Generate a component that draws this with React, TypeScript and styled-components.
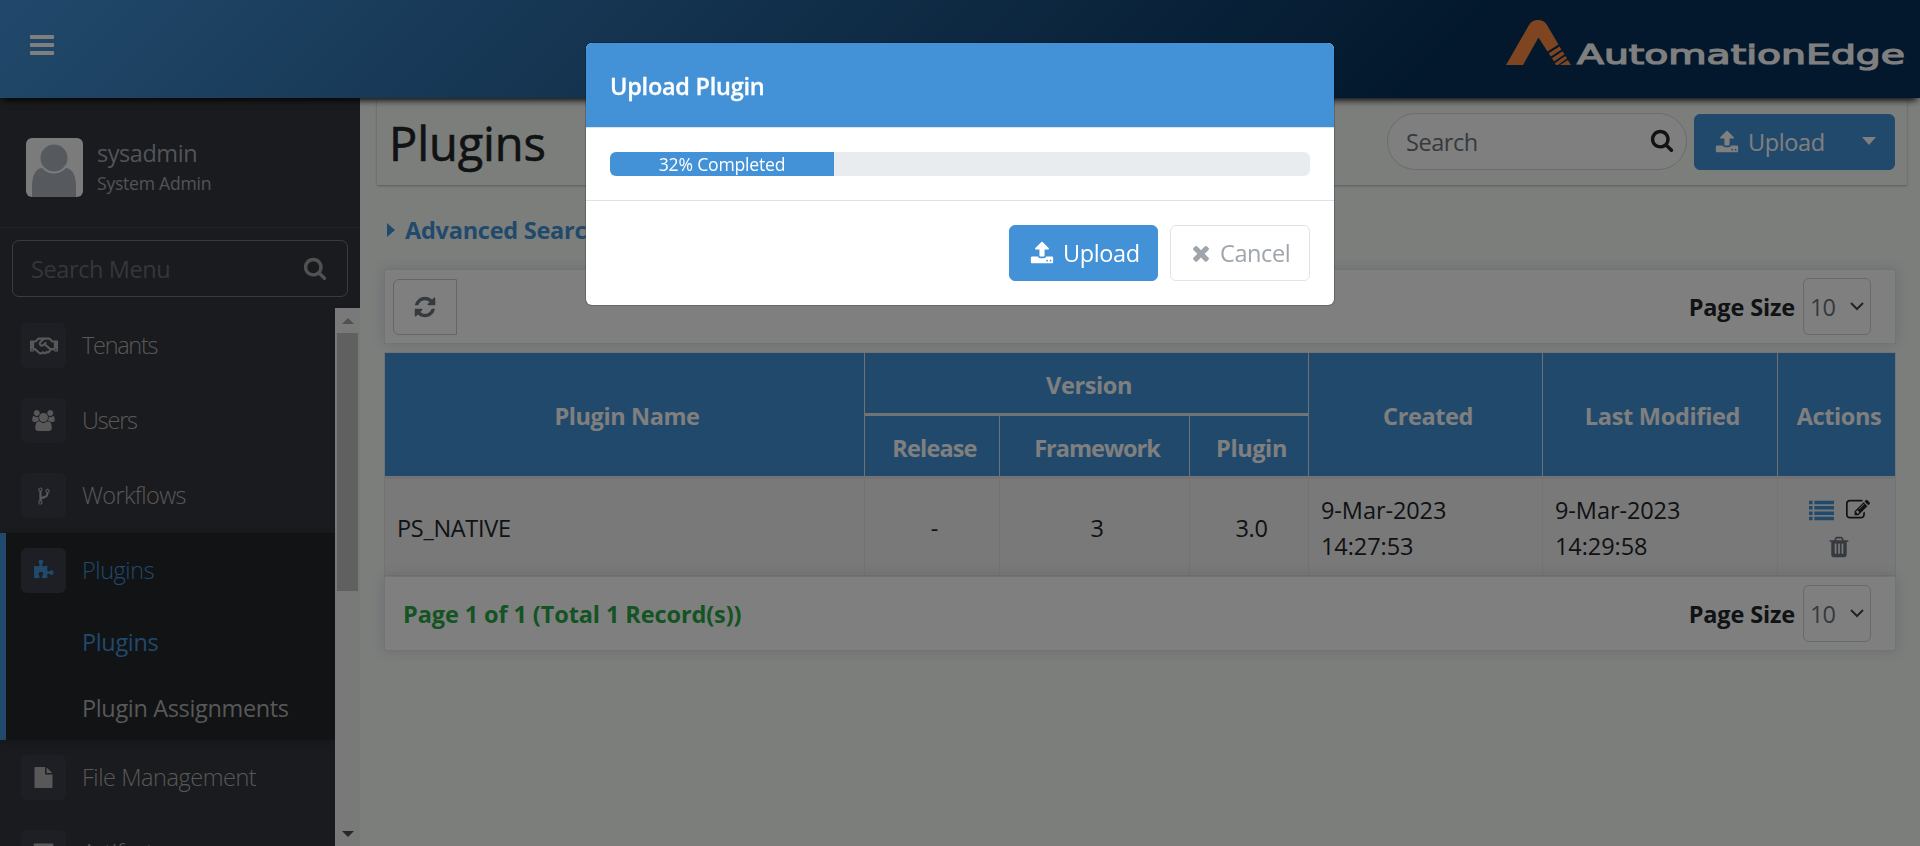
import React from 'react';
import styled, { createGlobalStyle, css } from 'styled-components';
import { FaRegHandshake } from 'react-icons/fa';

const blue = '#4392d7';

const Global = createGlobalStyle`
  * { box-sizing: border-box; }
  body {
    margin: 0;
    overflow: hidden;
    font-family: "Open Sans", "Noto Sans", "Liberation Sans", sans-serif;
    font-size: 23.5px;
    line-height: 36px;
    color: #212529;
    -webkit-font-smoothing: antialiased;
  }
`;

const paths = {
  search: 'M1216 832q0-185-131.5-316.5t-316.5-131.5-316.5 131.5-131.5 316.5 131.5 316.5 316.5 131.5 316.5-131.5 131.5-316.5zm512 832q0 52-38 90t-90 38q-54 0-90-38l-343-342q-179 124-399 124-143 0-273.5-55.5t-225-150-150-225-55.5-273.5 55.5-273.5 150-225 225-150 273.5-55.5 273.5 55.5 225 150 150 225 55.5 273.5q0 220-124 399l343 343q37 37 37 90z',
  upload: 'M1344 1472q0-26-19-45t-45-19-45 19-19 45 19 45 45 19 45-19 19-45zm256 0q0-26-19-45t-45-19-45 19-19 45 19 45 45 19 45-19 19-45zm128-224v320q0 40-28 68t-68 28h-1472q-40 0-68-28t-28-68v-320q0-40 28-68t68-28h427q21 56 70.5 92t110.5 36h256q61 0 110.5-36t70.5-92h427q40 0 68 28t28 68zm-325-648q-17 40-59 40h-256v448q0 26-19 45t-45 19h-256q-26 0-45-19t-19-45v-448h-256q-42 0-59-40-17-39 14-69l448-448q18-19 45-19t45 19l448 448q31 30 14 69z',
  times: 'M1490 1322q0 40-28 68l-136 136q-28 28-68 28t-68-28l-294-294-294 294q-28 28-68 28t-68-28l-136-136q-28-28-28-68t28-68l294-294-294-294q-28-28-28-68t28-68l136-136q28-28 68-28t68 28l294 294 294-294q28-28 68-28t68 28l136 136q28 28 28 68t-28 68l-294 294 294 294q28 28 28 68z',
  refresh: 'M1639 1056q0 5-1 7-64 268-268 434.5t-478 166.5q-146 0-282.5-55t-243.5-157l-129 129q-19 19-45 19t-45-19-19-45v-448q0-26 19-45t45-19h448q26 0 45 19t19 45-19 45l-137 137q71 66 161 102t187 36q134 0 250-65t186-179q11-17 53-117 8-23 30-23h192q13 0 22.5 9.5t9.5 22.5zm25-800v448q0 26-19 45t-45 19h-448q-26 0-45-19t-19-45 19-45l138-138q-148-137-349-137-134 0-250 65t-186 179q-11 17-53 117-8 23-30 23h-199q-13 0-22.5-9.5t-9.5-22.5v-7q65-268 270-434.5t480-166.5q146 0 284 55.5t245 156.5l130-129q19-19 45-19t45 19 19 45z',
  trash: 'M704 1376v-704q0-14-9-23t-23-9h-64q-14 0-23 9t-9 23v704q0 14 9 23t23 9h64q14 0 23-9t9-23zm256 0v-704q0-14-9-23t-23-9h-64q-14 0-23 9t-9 23v704q0 14 9 23t23 9h64q14 0 23-9t9-23zm256 0v-704q0-14-9-23t-23-9h-64q-14 0-23 9t-9 23v704q0 14 9 23t23 9h64q14 0 23-9t9-23zm-544-992h448l-48-117q-7-9-17-11h-317q-10 2-17 11zm928 32v64q0 14-9 23t-23 9h-96v948q0 83-47 143.5t-113 60.5h-832q-66 0-113-58.5t-47-141.5v-952h-96q-14 0-23-9t-9-23v-64q0-14 9-23t23-9h309l70-167q15-37 54-63t79-26h320q40 0 79 26t54 63l70 167h309q14 0 23 9t9 23z',
  edit: 'M888 1184l116-116-152-152-116 116v56h96v96h56zm440-720q-16-16-33 1l-350 350q-17 17-1 33t33-1l350-350q17-17 1-33zm80 594v190q0 119-84.5 203.5t-203.5 84.5h-832q-119 0-203.5-84.5t-84.5-203.5v-832q0-119 84.5-203.5t203.5-84.5h832q63 0 117 25 15 7 18 23 3 17-9 29l-49 49q-14 14-32 8-23-6-45-6h-832q-66 0-113 47t-47 113v832q0 66 47 113t113 47h832q66 0 113-47t47-113v-126q0-13 9-22l64-64q15-15 35-7t20 29zm-96-738l288 288-672 672h-288v-288zm444 132l-92 92-288-288 92-92q28-28 68-28t68 28l152 152q28 28 28 68t-28 68z',
  list: 'M0 1344h256v256h-256zM0 960h256v256h-256zM0 576h256v256h-256zM0 192h256v256h-256zM384 1344h1408v256h-1408zM384 960h1408v256h-1408zM384 576h1408v256h-1408zM384 192h1408v256h-1408z',
  fork: 'M672 1472q0-40-28-68t-68-28-68 28-28 68 28 68 68 28 68-28 28-68zm0-1152q0-40-28-68t-68-28-68 28-28 68 28 68 68 28 68-28 28-68zm640 128q0-40-28-68t-68-28-68 28-28 68 28 68 68 28 68-28 28-68zm96 0q0 52-26 96.5t-70 69.5q-2 287-226 414-67 38-203 81-128 40-169.5 71t-41.5 100v26q44 25 70 69.5t26 96.5q0 80-56 136t-136 56-136-56-56-136q0-52 26-96.5t70-69.5v-820q-44-25-70-69.5t-26-96.5q0-80 56-136t136-56 136 56 56 136q0 52-26 96.5t-70 69.5v497q54-26 154-57 55-17 87.5-29.5t70.5-31 59-39.5 40.5-51 28-69.5 8.5-91.5q-44-25-70-69.5t-26-96.5q0-80 56-136t136-56 136 56 56 136z',
  file: 'M1152 512v-472q22 14 36 28l408 408q14 14 28 36h-472zm-128 32q0 40 28 68t68 28h544v1056q0 40-28 68t-68 28h-1344q-40 0-68-28t-28-68v-1600q0-40 28-68t68-28h800v544z',
  archive: 'M64 128h1664v384h-1664zM128 640h1536v1024h-1536z',
  puzzle: 'M1755 1083q0 81-44.5 135t-123.5 54q-41 0-77.5-17.5t-59-38-56.5-38-71-17.5q-110 0-110 124 0 39 16 115t15 115v5q-22 0-33 1-34 3-97.5 11.5t-115.5 13.5-98 5q-61 0-103-26.5t-42-83.5q0-37 17.5-71t38-56.5 38-59 17.5-77.5q0-79-54-123.5t-135-44.5q-84 0-143 45.5t-59 127.5q0 43 15 83t33.5 64.5 33.5 53 15 50.5q0 45-46 89-37 35-117 35-95 0-245-24-9-2-27.5-4t-27.5-4l-13-2q-1 0-3-1-2 0-2-1v-1024q2 1 17.5 3.5t34 5 21.5 3.5q150 24 245 24 80 0 117-35 46-44 46-89 0-22-15-50.5t-33.5-53-33.5-64.5-15-83q0-82 59-127.5t144-45.5q80 0 134 44.5t54 123.5q0 41-17.5 77.5t-38 59-38 56.5-17.5 71q0 57 42 83.5t103 26.5q64 0 180-15t163-17v2q-1 2-3.5 17.5t-5 34-3.5 21.5q-24 150-24 245 0 80 35 117 44 46 89 46 22 0 50.5-15t53-33.5 64.5-33.5 83-15q82 0 127.5 59t45.5 143z',
  users: 'M529 896q-162 5-265 128h-134q-82 0-138-40.5t-56-118.5q0-353 124-353 6 0 43.5 21t97.5 42.5 119 21.5q67 0 133-23-5 37-5 66 0 139 81 256zm1071 637q0 120-73 189.5t-194 69.5h-874q-121 0-194-69.5t-73-189.5q0-53 3.5-103.5t14-109 26.5-108.5 43-97.5 62-81 85.5-53.5 111.5-20q10 0 43 21.5t73 48 107 48 135 21.5 135-21.5 107-48 73-48 43-21.5q61 0 111.5 20t85.5 53.5 62 81 43 97.5 26.5 108.5 14 109 3.5 103.5zm-1024-1277q0 106-75 181t-181 75-181-75-75-181 75-181 181-75 181 75 75 181zm704 384q0 159-112.5 271.5t-271.5 112.5-271.5-112.5-112.5-271.5 112.5-271.5 271.5-112.5 271.5 112.5 112.5 271.5zm576 225q0 78-56 118.5t-138 40.5h-134q-103-123-265-128 81-117 81-256 0-29-5-66 66 23 133 23 59 0 119-21.5t97.5-42.5 43.5-21q124 0 124 353zm-128-609q0 106-75 181t-181 75-181-75-75-181 75-181 181-75 181 75 75 181z',
  bars: 'M1664 1344v128q0 26-19 45t-45 19h-1408q-26 0-45-19t-19-45v-128q0-26 19-45t45-19h1408q26 0 45 19t19 45zm0-512v128q0 26-19 45t-45 19h-1408q-26 0-45-19t-19-45v-128q0-26 19-45t45-19h1408q26 0 45 19t19 45zm0-512v128q0 26-19 45t-45 19h-1408q-26 0-45-19t-19-45v-128q0-26 19-45t45-19h1408q26 0 45 19t19 45z',
};
type IconName = keyof typeof paths;

const Svg = styled.svg`
  display: block;
  flex: none;
  overflow: visible;
  fill: currentColor;
`;

function Icon({ name, size = 24 }: { name: IconName; size?: number }) {
  return (
    <Svg width={size} height={size} viewBox="0 0 1792 1792">
      <path d={paths[name]} />
    </Svg>
  );
}

const Page = styled.div`
  height: 846px;
  display: flex;
  flex-direction: column;
  background: #f8fcf9;
  overflow: hidden;
`;

const TopBar = styled.header`
  flex: none;
  height: 98px;
  display: flex;
  align-items: center;
  justify-content: space-between;
  padding: 0 15px 9px 28px;
  color: #fff;
  background: linear-gradient(135deg, ${blue} 0%, #063058 75%);
  box-shadow: 0 5px 7px -3px #000;
  position: relative;
  z-index: 1;
`;

const LogoSvg = styled.svg`
  margin-top: -5px;
`;

const Body = styled.div`
  flex: 1;
  min-height: 0;
  display: flex;
`;

const Sidebar = styled.aside`
  width: 360px;
  flex: none;
  display: flex;
  flex-direction: column;
  background: #34363c;
`;

const Profile = styled.div`
  height: 130px;
  flex: none;
  display: flex;
  gap: 14px;
  padding: 40px 26px 0;
  border-bottom: 1px solid #46494f;
`;

const Avatar = styled.svg`
  width: 57px;
  height: 59px;
  border-radius: 6px;
  background: #f6f6f6;
`;

const UserName = styled.div`
  line-height: 28px;
  margin-top: 1px;
  letter-spacing: -0.45px;
  color: #a3a8b5;
`;

const UserRole = styled.div`
  font-size: 17.6px;
  line-height: 28px;
  margin-top: 2px;
  letter-spacing: -0.25px;
  color: #a3a6ac;
`;

const MenuSearch = styled.div`
  height: 57px;
  flex: none;
  margin: 12px 12px 11px;
  padding: 0 20px 0 18px;
  display: flex;
  align-items: center;
  justify-content: space-between;
  border: 1px solid #74767c;
  border-radius: 7px;
  color: #646e76;
  letter-spacing: -0.4px;
  svg { color: #a2a2a2; margin-top: -2px; }
`;

const MenuArea = styled.div`
  flex: 1;
  min-height: 0;
  display: flex;
`;

const Menu = styled.nav`
  flex: 1;
  overflow: hidden;
`;

const Group = styled.div<{ $active?: boolean }>`
  ${p => p.$active && css`
    background: #222629;
    box-shadow: inset 6px 0 0 ${blue}, 0 3px 10px rgba(0, 0, 0, 0.2);
  `}
`;

const MenuItem = styled.div<{ $active?: boolean; $spacing?: number }>`
  height: 75px;
  display: flex;
  align-items: center;
  gap: 16px;
  padding-left: 21px;
  font-weight: 300;
  letter-spacing: ${p => p.$spacing ?? -0.45}px;
  color: ${p => (p.$active ? blue : '#b0b0b0')};
`;

const MenuLabel = styled.span`
  padding-bottom: 2px;
`;

const IconBox = styled.span`
  width: 45px;
  height: 45px;
  display: flex;
  align-items: center;
  justify-content: center;
  border-radius: 6px;
  background: #3c3e48;
`;

const SubItem = styled.div<{ $active?: boolean }>`
  height: 66px;
  padding: 16px 0 0 82px;
  letter-spacing: -0.35px;
  color: ${p => (p.$active ? blue : '#b0b0b0')};
`;

const Scrollbar = styled.div`
  width: 25px;
  display: flex;
  flex-direction: column;
  align-items: center;
  background: #f2f2f2;
`;

const Thumb = styled.div`
  width: 21px;
  height: 258px;
  background: #c1c1c1;
`;

const ScrollArrow = styled.div<{ $down?: boolean }>`
  width: 25px;
  height: 25px;
  display: flex;
  align-items: center;
  justify-content: center;
  margin-top: ${p => (p.$down ? 'auto' : 0)};
  &::before {
    content: '';
    border: 6px solid transparent;
    ${p => (p.$down
      ? 'border-bottom: 0; border-top-color: #505050;'
      : 'border-top: 0; border-bottom-color: #a3a3a3;')}
  }
`;

const Main = styled.main`
  flex: 1;
  min-width: 0;
  padding: 0 13px 0 17px;
`;

const TitleBar = styled.section`
  height: 87px;
  display: flex;
  align-items: center;
  gap: 7px;
  padding: 0 12px 0 12px;
  box-shadow: 0 1px 2px rgba(0, 0, 0, 0.28);
`;

const Title = styled.h1`
  margin: 3px auto 0 0;
  font-size: 47px;
  line-height: 60px;
  font-weight: 500;
  letter-spacing: -0.1px;
  -webkit-text-stroke: 0.6px currentColor;
`;

const SearchField = styled.div`
  width: 300px;
  height: 57px;
  display: flex;
  align-items: center;
  justify-content: space-between;
  padding: 0 12px 0 18px;
  border: 1px solid #d5d9d7;
  border-radius: 29px;
  background: #fff;
  color: #6c757d;
  letter-spacing: -0.45px;
  svg { color: #212529; margin-top: -4px; }
`;

const Button = styled.button<{ $plain?: boolean; $width: number }>`
  width: ${p => p.$width}px;
  height: 56px;
  display: flex;
  align-items: center;
  gap: ${p => (p.$plain ? 7 : 9)}px;
  padding: 0 0 0 ${p => (p.$plain ? 18 : 20)}px;
  border: 1px solid ${p => (p.$plain ? '#e1e4e7' : blue)};
  border-radius: 6px;
  background: ${p => (p.$plain ? '#fff' : blue)};
  color: ${p => (p.$plain ? '#9fa5aa' : '#fff')};
  font: inherit;
  letter-spacing: -0.4px;
`;

const Caret = styled.i<{ $right?: boolean }>`
  display: inline-block;
  border: 7px solid transparent;
  ${p => (p.$right
    ? 'border-right: 0; border-left: 8px solid currentColor; margin-right: 10px;'
    : 'border-bottom: 0; border-top: 8px solid currentColor; margin: -1px 0 0 28px;')}
`;

const Content = styled.div`
  padding: 27px 11px 0 7px;
`;

const Advanced = styled.div`
  height: 36px;
  padding-left: 3px;
  display: flex;
  align-items: center;
  margin-bottom: 21px;
  color: ${blue};
  font-weight: 700;
  letter-spacing: -0.25px;
`;

const Bar = styled.section`
  height: 75px;
  display: flex;
  align-items: center;
  padding: 0 24px 0 8px;
  border: 1px solid #e3e6ee;
  background: #fff;
  box-shadow: 0 0 12px rgba(60, 60, 110, 0.16);
`;

const RefreshButton = styled.button`
  width: 64px;
  height: 56px;
  display: flex;
  align-items: center;
  justify-content: center;
  padding: 0;
  border: 1px solid #c8cacc;
  border-radius: 6px 0 0 6px;
  background: transparent;
  color: #6c757d;
`;

const PageInfo = styled.div`
  padding-left: 10px;
  font-weight: 700;
  letter-spacing: -0.1px;
  color: #28a745;
`;

const SizeLabel = styled.div`
  margin: 1px 8px 0 auto;
  font-weight: 700;
  letter-spacing: -0.15px;
`;

const Select = styled.div`
  width: 68px;
  height: 57px;
  display: flex;
  align-items: center;
  justify-content: space-between;
  padding: 0 6px 0 6px;
  border: 1px solid #ced4da;
  border-radius: 6px;
  color: #6c757d;
  letter-spacing: -1px;
  svg { margin-top: -1px; }
`;

const Table = styled.table`
  width: 100%;
  margin-top: 8px;
  table-layout: fixed;
  border-collapse: separate;
  border-spacing: 0;
  border: 1px solid #e3e6ea;
`;

const Th = styled.th<{ $last?: boolean; $height: number; $spacing?: number }>`
  height: ${p => p.$height}px;
  padding: 3px 0 0 5px;
  border-right: ${p => (p.$last ? 0 : '1px solid #dee2e6')};
  border-bottom: 3px solid #e3e6ea;
  background: ${blue};
  color: #fff;
  font-weight: 700;
  letter-spacing: ${p => p.$spacing ?? -0.4}px;
`;

const Td = styled.td<{ $center?: boolean; $last?: boolean; $spacing?: number }>`
  height: 96px;
  padding: ${p => (p.$center ? '2px 0 0 5px' : '2px 12px 0')};
  border-right: ${p => (p.$last ? 0 : '1px solid #e3e6ea')};
  background: #f2f2f2;
  text-align: ${p => (p.$center ? 'center' : 'left')};
  letter-spacing: ${p => p.$spacing ?? -0.3}px;
`;

const Actions = styled.div`
  width: 84px;
  margin: 0 auto;
  display: flex;
  flex-wrap: wrap;
  justify-content: center;
  gap: 12px;
`;

const Tint = styled.span<{ $color: string }>`
  color: ${p => p.$color};
`;

const Overlay = styled.div`
  position: fixed;
  inset: 0;
  z-index: 5;
  display: flex;
  align-items: flex-start;
  justify-content: center;
  padding-top: 43px;
  background: rgba(0, 0, 0, 0.5);
`;

const Dialog = styled.div`
  width: 748px;
  height: 262px;
  border-radius: 6px;
  background: #fff;
  box-shadow: 0 0 0 1px rgba(0, 0, 0, 0.2);
  overflow: hidden;
`;

const DialogHeader = styled.div`
  height: 85px;
  display: flex;
  align-items: center;
  padding: 2px 0 0 24px;
  border-bottom: 1px solid #dee2e6;
  background: ${blue};
  color: #fff;
  font-weight: 600;
  letter-spacing: -0.25px;
  -webkit-text-stroke: 0.3px currentColor;
`;

const DialogBody = styled.div`
  padding: 24px;
  border-bottom: 1px solid #dee2e6;
`;

const Track = styled.div`
  height: 24px;
  border-radius: 6px;
  overflow: hidden;
  background: #e9ecef;
`;

const Fill = styled.div`
  height: 24px;
  background: ${blue};
  color: #fff;
  font-size: 17.6px;
  line-height: 25px;
  letter-spacing: -0.2px;
  text-align: center;
`;

const DialogFooter = styled.div`
  display: flex;
  justify-content: flex-end;
  gap: 12px;
  padding: 24px;
`;

const menuTop: { label: string; icon: React.ReactNode; spacing: number }[] = [
  { label: 'Tenants', icon: <FaRegHandshake size={28} />, spacing: -1.3 },
  { label: 'Users', icon: <Icon name="users" size={21} />, spacing: -1.2 },
  { label: 'Workflows', icon: <Icon name="fork" size={20} />, spacing: -0.6 },
];

function PageSize() {
  return (
    <>
      <SizeLabel>Page Size</SizeLabel>
      <Select>
        10
        <svg width="14" height="9" viewBox="0 0 14 9" fill="none" stroke="#43484d" strokeWidth="2">
          <path d="M1 1l6 6 6-6" />
        </svg>
      </Select>
    </>
  );
}

function Logo() {
  return (
    <LogoSvg width="400" height="60" viewBox="1505 12 400 60">
      <g fill="#fd8a40">
        <path d="M1506 65L1529 25Q1532 20 1538 20Q1544 20 1547 25L1558.500 44.500L1547.500 51.500L1538.500 37.500L1523 65Z" />
        <path d="M1548.700 53.300L1559.500 46.500L1561.500 49.500L1551 56.500Z" />
        <path d="M1552 58.200L1562.500 51.200L1564.500 54.300L1554 61.500Z" />
        <path d="M1554.800 63.200L1561.500 58.500L1565.500 56L1567 58.500L1558 65L1556 65Z" />
        <path d="M1560 65L1567.800 60L1571 65Z" />
      </g>
      <text
        x="1577"
        y="64"
        textLength="328"
        lengthAdjust="spacingAndGlyphs"
        fontFamily="DejaVu Sans"
        fontSize="27"
        fill="#fff"
        stroke="#fff"
        strokeWidth="1.2"
      >
        AutomationEdge
      </text>
    </LogoSvg>
  );
}

export default function App() {
  const progress = 32;
  return (
    <>
      <Global />
      <Page>
        <TopBar>
          <Icon name="bars" size={28} />
          <Logo />
        </TopBar>
        <Body>
          <Sidebar>
            <Profile>
              <Avatar viewBox="0 0 57 59">
                <path d="M6 59V47Q7 30 17 30H39Q49 30 50 47V59Z" fill="#acb3ba" />
                <circle cx="28" cy="20" r="14.500" fill="#acb3ba" stroke="#f6f6f6" strokeWidth="2" />
              </Avatar>
              <div>
                <UserName>sysadmin</UserName>
                <UserRole>System Admin</UserRole>
              </div>
            </Profile>
            <MenuSearch>
              Search Menu
              <Icon name="search" />
            </MenuSearch>
            <MenuArea>
              <Menu>
                {menuTop.map(m => (
                  <MenuItem key={m.label} $spacing={m.spacing}>
                    <IconBox>{m.icon}</IconBox>
                    <MenuLabel>{m.label}</MenuLabel>
                  </MenuItem>
                ))}
                <Group $active>
                  <MenuItem $active>
                    <IconBox><Icon name="puzzle" size={21} /></IconBox>
                    <MenuLabel>Plugins</MenuLabel>
                  </MenuItem>
                  <SubItem $active>Plugins</SubItem>
                  <SubItem>Plugin Assignments</SubItem>
                </Group>
                <MenuItem>
                  <IconBox><Icon name="file" size={21} /></IconBox>
                  <MenuLabel>File Management</MenuLabel>
                </MenuItem>
                <MenuItem>
                  <IconBox><Icon name="archive" size={21} /></IconBox>
                  <MenuLabel>Artifacts</MenuLabel>
                </MenuItem>
              </Menu>
              <Scrollbar>
                <ScrollArrow />
                <Thumb />
                <ScrollArrow $down />
              </Scrollbar>
            </MenuArea>
          </Sidebar>
          <Main>
            <TitleBar>
              <Title>Plugins</Title>
              <SearchField>
                Search
                <Icon name="search" />
              </SearchField>
              <Button $width={201}>
                <Icon name="upload" />
                Upload
                <Caret />
              </Button>
            </TitleBar>
            <Content>
              <Advanced>
                <Caret $right />
                Advanced Search
              </Advanced>
              <Bar>
                <RefreshButton><Icon name="refresh" /></RefreshButton>
                <PageSize />
              </Bar>
              <Table>
                <colgroup>
                  <col style={{ width: 480 }} />
                  <col style={{ width: 135 }} />
                  <col style={{ width: 190 }} />
                  <col style={{ width: 119 }} />
                  <col style={{ width: 234 }} />
                  <col style={{ width: 235 }} />
                  <col />
                </colgroup>
                <thead>
                  <tr>
                    <Th $height={126} rowSpan={2}>Plugin Name</Th>
                    <Th $height={63} colSpan={3}>Version</Th>
                    <Th $height={126} rowSpan={2}>Created</Th>
                    <Th $height={126} rowSpan={2} $spacing={-0.3}>Last Modified</Th>
                    <Th $height={126} rowSpan={2} $last>Actions</Th>
                  </tr>
                  <tr>
                    <Th $height={63} $spacing={-0.85}>Release</Th>
                    <Th $height={63} $spacing={-1}>Framework</Th>
                    <Th $height={63}>Plugin</Th>
                  </tr>
                </thead>
                <tbody>
                  <tr>
                    <Td>PS_NATIVE</Td>
                    <Td $center>-</Td>
                    <Td $center>3</Td>
                    <Td $center>3.0</Td>
                    <Td $spacing={-0.08}>9-Mar-2023<br />14:27:53</Td>
                    <Td $spacing={-0.08}>9-Mar-2023<br />14:29:58</Td>
                    <Td $center $last>
                      <Actions>
                        <Tint $color={blue}><Icon name="list" size={25} /></Tint>
                        <Tint $color="#212529"><Icon name="edit" /></Tint>
                        <Tint $color="#6c757d"><Icon name="trash" /></Tint>
                      </Actions>
                    </Td>
                  </tr>
                </tbody>
              </Table>
              <Bar>
                <PageInfo>Page 1 of 1 (Total 1 Record(s))</PageInfo>
                <PageSize />
              </Bar>
            </Content>
          </Main>
        </Body>
      </Page>
      <Overlay>
        <Dialog>
          <DialogHeader>Upload Plugin</DialogHeader>
          <DialogBody>
            <Track>
              <Fill style={{ width: `${progress}%` }}>{progress}% Completed</Fill>
            </Track>
          </DialogBody>
          <DialogFooter>
            <Button $width={149}>
              <Icon name="upload" />
              Upload
            </Button>
            <Button $width={140} $plain>
              <Icon name="times" />
              Cancel
            </Button>
          </DialogFooter>
        </Dialog>
      </Overlay>
    </>
  );
}
